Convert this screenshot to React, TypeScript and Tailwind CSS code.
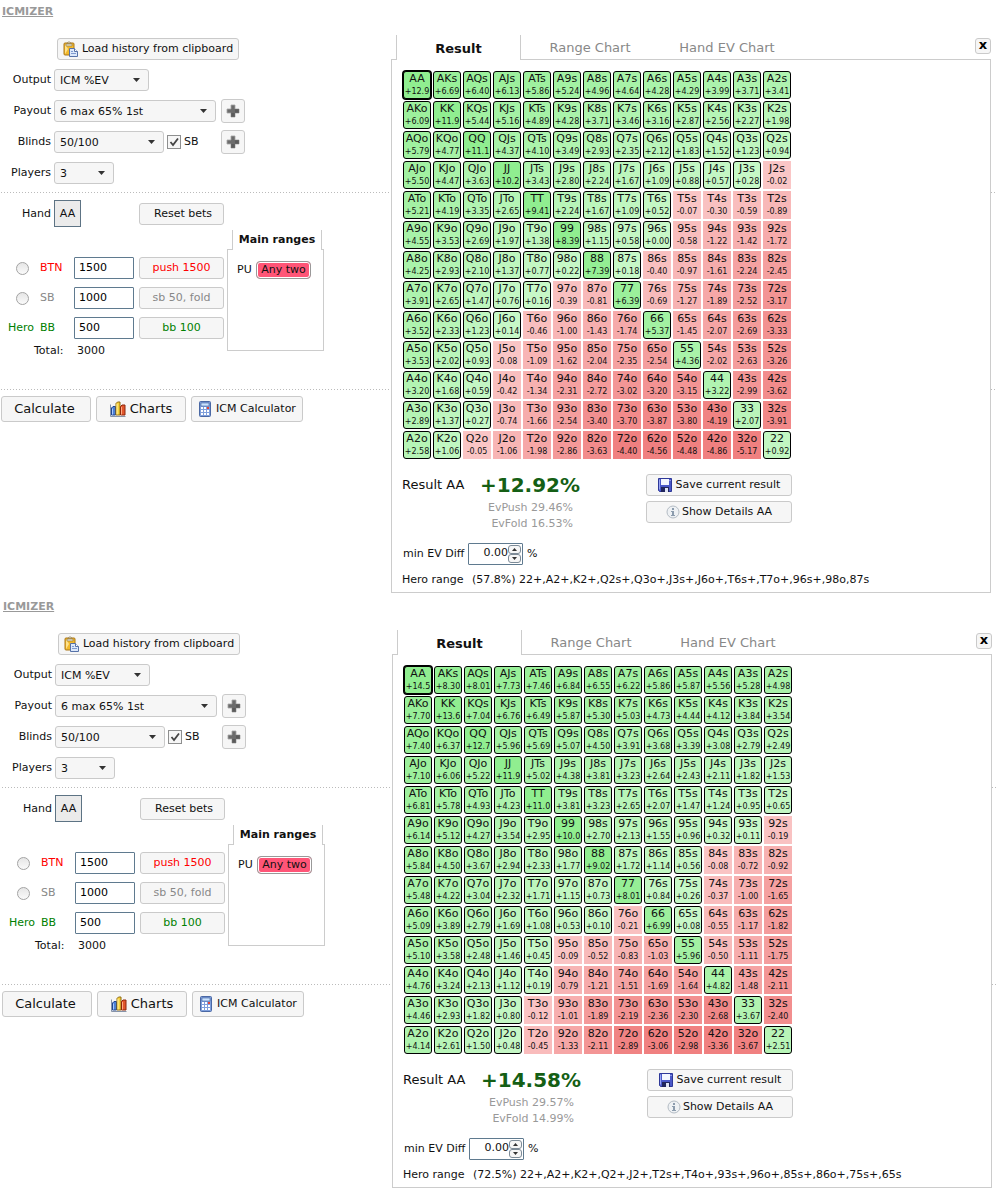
import React, { useId, useState } from 'react';

type PanelData = {
  ev: string[];
  result: string;
  evPush: string;
  evFold: string;
  percent: string;
  range: string;
  // EV at which the cell colour stops getting darker
  maxWin: number;
  maxLoss: number;
};

const RANKS = 'AKQJT98765432'.split('');

const panels: PanelData[] = [
  {
    ev: [
      '+12.9 +6.69 +6.40 +6.13 +5.86 +5.24 +4.96 +4.64 +4.28 +4.29 +3.99 +3.71 +3.41',
      '+6.09 +11.9 +5.44 +5.16 +4.89 +4.28 +3.71 +3.46 +3.16 +2.87 +2.56 +2.27 +1.98',
      '+5.79 +4.77 +11.1 +4.37 +4.10 +3.49 +2.93 +2.35 +2.12 +1.83 +1.52 +1.23 +0.94',
      '+5.50 +4.47 +3.63 +10.2 +3.43 +2.80 +2.24 +1.67 +1.09 +0.88 +0.57 +0.28 -0.02',
      '+5.21 +4.19 +3.35 +2.65 +9.41 +2.24 +1.67 +1.09 +0.52 -0.07 -0.30 -0.59 -0.89',
      '+4.55 +3.53 +2.69 +1.97 +1.38 +8.39 +1.15 +0.58 +0.00 -0.58 -1.22 -1.42 -1.72',
      '+4.25 +2.93 +2.10 +1.37 +0.77 +0.22 +7.39 +0.18 -0.40 -0.97 -1.61 -2.24 -2.45',
      '+3.91 +2.65 +1.47 +0.76 +0.16 -0.39 -0.81 +6.39 -0.69 -1.27 -1.89 -2.52 -3.17',
      '+3.52 +2.33 +1.23 +0.14 -0.46 -1.00 -1.43 -1.74 +5.37 -1.45 -2.07 -2.69 -3.33',
      '+3.53 +2.02 +0.93 -0.08 -1.09 -1.62 -2.04 -2.35 -2.54 +4.36 -2.02 -2.63 -3.26',
      '+3.20 +1.68 +0.59 -0.42 -1.34 -2.31 -2.72 -3.02 -3.20 -3.15 +3.22 -2.99 -3.62',
      '+2.89 +1.37 +0.27 -0.74 -1.66 -2.54 -3.40 -3.70 -3.87 -3.80 -4.19 +2.07 -3.91',
      '+2.58 +1.06 -0.05 -1.06 -1.98 -2.86 -3.63 -4.40 -4.56 -4.48 -4.86 -5.17 +0.92',
    ],
    result: '+12.92%',
    evPush: '29.46%',
    evFold: '16.53%',
    percent: '(57.8%)',
    range: '22+,A2+,K2+,Q2s+,Q3o+,J3s+,J6o+,T6s+,T7o+,96s+,98o,87s',
    maxWin: 8,
    maxLoss: 4.4,
  },
  {
    ev: [
      '+14.5 +8.30 +8.01 +7.73 +7.46 +6.84 +6.55 +6.22 +5.86 +5.87 +5.56 +5.28 +4.98',
      '+7.70 +13.6 +7.04 +6.76 +6.49 +5.87 +5.30 +5.03 +4.73 +4.44 +4.12 +3.84 +3.54',
      '+7.40 +6.37 +12.7 +5.96 +5.69 +5.07 +4.50 +3.91 +3.68 +3.39 +3.08 +2.79 +2.49',
      '+7.10 +6.06 +5.22 +11.9 +5.02 +4.38 +3.81 +3.23 +2.64 +2.43 +2.11 +1.82 +1.53',
      '+6.81 +5.78 +4.93 +4.23 +11.0 +3.81 +3.23 +2.65 +2.07 +1.47 +1.24 +0.95 +0.65',
      '+6.14 +5.12 +4.27 +3.54 +2.95 +10.0 +2.70 +2.13 +1.55 +0.96 +0.32 +0.11 -0.19',
      '+5.84 +4.50 +3.67 +2.94 +2.33 +1.77 +9.02 +1.72 +1.14 +0.56 -0.08 -0.72 -0.92',
      '+5.48 +4.22 +3.04 +2.32 +1.71 +1.15 +0.73 +8.01 +0.84 +0.26 -0.37 -1.00 -1.65',
      '+5.09 +3.89 +2.79 +1.69 +1.08 +0.53 +0.10 -0.21 +6.99 +0.08 -0.55 -1.17 -1.82',
      '+5.10 +3.58 +2.48 +1.46 +0.45 -0.09 -0.52 -0.83 -1.03 +5.96 -0.50 -1.11 -1.75',
      '+4.76 +3.24 +2.13 +1.12 +0.19 -0.79 -1.21 -1.51 -1.69 -1.64 +4.82 -1.48 -2.11',
      '+4.46 +2.93 +1.82 +0.80 -0.12 -1.01 -1.89 -2.19 -2.36 -2.30 -2.68 +3.67 -2.40',
      '+4.14 +2.61 +1.50 +0.48 -0.45 -1.33 -2.11 -2.89 -3.06 -2.98 -3.36 -3.67 +2.51',
    ],
    result: '+14.58%',
    evPush: '29.57%',
    evFold: '14.99%',
    percent: '(72.5%)',
    range: '22+,A2+,K2+,Q2+,J2+,T2s+,T4o+,93s+,96o+,85s+,86o+,75s+,65s',
    maxWin: 9,
    maxLoss: 3,
  },
];

const handName = (row: number, col: number) => {
  if (row === col) return RANKS[row] + RANKS[row];
  return row < col ? `${RANKS[row]}${RANKS[col]}s` : `${RANKS[col]}${RANKS[row]}o`;
};

const mix = (from: number[], to: number[], t: number) =>
  `rgb(${from.map((c, i) => Math.round(c + (to[i] - c) * t)).join(',')})`;

const cellColor = (value: string, data: PanelData) => {
  const ev = Math.abs(parseFloat(value));
  return value.startsWith('+')
    ? mix([200, 248, 200], [144, 238, 144], Math.min(1, ev / data.maxWin))
    : mix([250, 198, 198], [240, 128, 128], Math.min(1, ev / data.maxLoss));
};

const ClipboardIcon = () => (
  <svg width="16" height="16" viewBox="0 0 16 16" aria-hidden="true">
    <rect x="1" y="2" width="10" height="12" rx="1" fill="#f2b92c" stroke="#a9761a" />
    <path d="M2 3v10l3-5z" fill="#ffe28a" />
    <path d="M3 3h6v2H3z" fill="#e9e4d2" stroke="#8b7440" strokeWidth=".6" />
    <path d="M4.5 2.500V1.500q1.500-1.500 3 0v1z" fill="#d9d2bb" stroke="#8b7440" strokeWidth=".6" />
    <path d="M6.500 7.500h5l3 3v5h-8z" fill="#dce8fa" stroke="#5672a8" />
    <path d="M11.500 7.500v3h3" fill="#fff" stroke="#5672a8" />
    <path d="M8 10.500h2M8 12.500h5" stroke="#7f9bd0" />
  </svg>
);

const ChartIcon = () => (
  <svg width="16" height="16" viewBox="0 0 16 16" aria-hidden="true">
    <path d="M.5 3.500v12h15" fill="none" stroke="#8693a8" />
    <path d="M1.500 7l1.500-1.500h2.500V14H1.500z" fill="#4b7fd6" stroke="#1f4590" />
    <path d="M2.500 7.500v6" stroke="#a8c8fb" />
    <path d="M6 2.500L7.500 1H10v13H6z" fill="#f7d23c" stroke="#8f6a10" />
    <path d="M7 3v10.500" stroke="#fff3ac" />
    <path d="M10.500 5.500L12 4h3v10h-4.500z" fill="#e2562c" stroke="#8c260c" />
    <path d="M11.500 6v7.500" stroke="#ffab84" />
  </svg>
);

const CalculatorIcon = () => (
  <svg width="14" height="16" viewBox="0 0 14 16" aria-hidden="true">
    <rect x="1.500" y=".5" width="11" height="15" rx="1" fill="#7f9fdc" stroke="#4a68a4" />
    <rect x="3" y="2" width="8" height="3" fill="#c9e2ff" stroke="#2f4c87" strokeWidth=".5" />
    <path d="M3 7h5M3 10h5M3 13h5" stroke="#fff" strokeWidth="2" strokeDasharray="2 1" />
    <path d="M9 7h2" stroke="#e5443b" strokeWidth="2" />
    <path d="M9 10h2M9 13h2" stroke="#fff" strokeWidth="2" />
  </svg>
);

const DiskIcon = () => (
  <svg width="14" height="14" viewBox="0 0 14 14" aria-hidden="true">
    <path d="M.5.5h13v13h-12l-1-1z" fill="#4a58c8" stroke="#2e3898" />
    <rect x="3" y="1" width="8" height="6" fill="#f3f6ff" />
    <path d="M1.500 1.500v10" stroke="#9aa6f4" />
    <rect x="3" y="9" width="8" height="5" fill="#20255c" />
    <rect x="7" y="10" width="3" height="4" fill="#dfe4f5" />
    <path d="M12 2v1" stroke="#cfd5ff" />
  </svg>
);

const InfoIcon = () => (
  <svg width="14" height="14" viewBox="0 0 14 14" aria-hidden="true">
    <circle cx="7" cy="7" r="6" fill="#eef1f4" stroke="#b4bcc4" />
    <path d="M6 3h2v2H6z" fill="#8c9cad" />
    <path d="M5 6h3v4h1v1H5v-1h1V7H5z" fill="#8c9cad" />
  </svg>
);

const PlusIcon = () => (
  <svg width="14" height="14" viewBox="0 0 14 14" aria-hidden="true">
    <path d="M5 1h4v4h4v4H9v4H5V9H1V5h4z" fill="#6c6c6c" stroke="#a5a5a5" strokeWidth=".8" />
    <path d="M5 9h4v4H5zM9 5h4v4H9z" fill="#505050" opacity=".6" />
  </svg>
);

type ButtonProps = React.ButtonHTMLAttributes<HTMLButtonElement>;

const Button = ({ className = '', ...props }: ButtonProps) => (
  <button
    type="button"
    className={`flex items-center justify-center rounded-[3px] border border-[#cacaca] bg-[#f6f6f6] whitespace-nowrap ${className}`}
    {...props}
  />
);

const Select = ({ id, value, className }: { id: string; value: string; className: string }) => (
  <div className={`relative h-[22px] ${className}`}>
    <select
      id={id}
      className="h-full w-full appearance-none rounded-[3px] border border-[#cacaca] bg-[#f6f6f6] pt-px pl-[5px]"
    >
      <option>{value}</option>
    </select>
    <svg
      className="pointer-events-none absolute top-[9px] right-[9px]"
      width="7"
      height="4"
      viewBox="0 0 7 4"
      aria-hidden="true"
    >
      <path d="M0 0h7L3.500 4z" fill="#333" />
    </svg>
  </div>
);

const Field = ({ id, label, children }: { id: string; label: string; children: React.ReactNode }) => (
  <div className="flex h-6 items-center">
    <label htmlFor={id} className="mr-[3px] w-[51px] text-right">
      {label}
    </label>
    {children}
  </div>
);

const DottedLine = ({ className }: { className: string }) => (
  <div
    className={`col-span-2 col-start-1 ml-px h-px bg-[repeating-linear-gradient(90deg,#bbb_0_1px,transparent_1px_3px)] ${className}`}
  />
);

const seats = [
  { name: 'BTN', stack: '1500', action: 'push 1500', color: 'text-[#ff0000]' },
  { name: 'SB', stack: '1000', action: 'sb 50, fold', color: 'text-[#888]' },
  { name: 'BB', stack: '500', action: 'bb 100', color: 'text-[#008000]', hero: true },
];

const SetupForm = () => {
  const id = useId();

  return (
    <form className="col-start-1 row-start-1 flex flex-col gap-[7px] pt-[2px] pb-[7px]">
      <div className="flex h-6 items-center pl-[57px]">
        <Button className="h-[22px] w-[182px] gap-[3px]">
          <ClipboardIcon />
          Load history from clipboard
        </Button>
      </div>
      <Field id={`${id}-output`} label="Output">
        <Select id={`${id}-output`} value="ICM %EV" className="w-[95px]" />
      </Field>
      <Field id={`${id}-payout`} label="Payout">
        <Select id={`${id}-payout`} value="6 max 65% 1st" className="w-[162px]" />
        <Button className="ml-[5px] size-6" aria-label="Add payout">
          <PlusIcon />
        </Button>
      </Field>
      <Field id={`${id}-blinds`} label="Blinds">
        <Select id={`${id}-blinds`} value="50/100" className="w-[110px]" />
        <label className="ml-[3px] flex w-[54px] items-center gap-[3px]">
          <span className="relative size-[14px]">
            <input
              type="checkbox"
              defaultChecked
              className="peer block size-[14px] appearance-none border border-[#8e8f8f] bg-[#f6f6f6]"
            />
            <svg
              className="pointer-events-none absolute top-0 left-0 hidden peer-checked:block"
              width="14"
              height="14"
              viewBox="0 0 14 14"
              aria-hidden="true"
            >
              <path d="M3.500 7l2.500 3 5-6.500" fill="none" stroke="#444" strokeWidth="1.800" />
            </svg>
          </span>
          SB
        </label>
        <Button className="size-6" aria-label="Add blinds">
          <PlusIcon />
        </Button>
      </Field>
      <Field id={`${id}-players`} label="Players">
        <Select id={`${id}-players`} value="3" className="w-[60px]" />
      </Field>
    </form>
  );
};

const Bets = () => {
  const id = useId();

  return (
    <div className="col-start-1 row-start-3 flex items-start pt-[7px] pb-[30px]">
      <div className="w-[224px]">
        <div className="flex items-center">
          <span className="mr-[3px] w-[51px] text-right">Hand</span>
          <button type="button" className="size-[27px] border border-[#5d7384] bg-[#ebebeb]">
            AA
          </button>
          <Button className="ml-auto h-[22px] w-[85px] pl-[3px]">Reset bets</Button>
        </div>
        <div className="mt-[30px] flex flex-col gap-2">
          {seats.map((seat) => (
            <div key={seat.name} className={`flex h-[22px] items-center ${seat.color}`}>
              <div className="w-10 pl-2">
                {seat.hero ? (
                  'Hero'
                ) : (
                  <input
                    type="radio"
                    name={`${id}-hero`}
                    aria-label={seat.name}
                    className="ml-2 block size-[13px] appearance-none rounded-full border border-[#a3a3a3] bg-linear-to-b from-[#e6e6e6] to-[#fafafa]"
                  />
                )}
              </div>
              <label htmlFor={`${id}-${seat.name}`} className="w-[34px]">
                {seat.name}
              </label>
              <input
                id={`${id}-${seat.name}`}
                defaultValue={seat.stack}
                className="h-full w-[60px] rounded-[1px] border border-[#5f7a8f] bg-white pb-[2px] pl-1 text-black"
              />
              <Button className="ml-auto h-full w-[85px]">{seat.action}</Button>
            </div>
          ))}
        </div>
        <div className="mt-1 flex">
          <span className="w-[77px] pl-[34px]">Total:</span>
          <span>3000</span>
        </div>
      </div>

      <div className="mt-[30px] ml-[3px] w-[97px]">
        <div className="flex h-5">
          <div className="w-[5px] border-b border-[#ccc]" />
          <div className="flex-1 border-x border-[#ccc] text-center leading-5 font-bold whitespace-nowrap">
            Main ranges
          </div>
          <div className="w-[2px] border-b border-[#ccc]" />
        </div>
        <div className="h-[101px] border-x border-b border-[#ccc] pt-[11px] pl-[9px]">
          <div className="flex items-center justify-between pr-3">
            PU
            <button
              type="button"
              className="h-[18px] w-[55px] rounded-[4px] border border-[#999] bg-[#ff5577] leading-[14px] whitespace-nowrap inset-ring inset-ring-white"
            >
              Any two
            </button>
          </div>
        </div>
      </div>
    </div>
  );
};

const EvTable = ({ data }: { data: PanelData }) => (
  <table className="ml-[9px] border-separate border-spacing-[2px] text-center">
    <tbody>
      {data.ev.map((line, row) => (
        <tr key={row}>
          {line.split(' ').map((value, col) => {
            const win = value.startsWith('+');
            const selected = row === 0 && col === 0;
            return (
              <td
                key={col}
                className={`size-7 p-0 ${win ? 'rounded-[3px] border border-black' : 'border border-transparent'} ${
                  selected ? 'ring-1 ring-black' : ''
                }`}
                style={{ backgroundColor: cellColor(value, data) }}
              >
                <div className="w-[26px] leading-[13px]">{handName(row, col)}</div>
                <div className="w-[26px] text-[8px] leading-[13px]">{value}</div>
              </td>
            );
          })}
        </tr>
      ))}
    </tbody>
  </table>
);

const tabs = ['Result', 'Range Chart', 'Hand EV Chart'];

const ResultPanel = ({ data }: { data: PanelData }) => {
  const id = useId();
  const [minDiff, setMinDiff] = useState(0);

  return (
    <div className="z-10 col-start-2 row-span-5 row-start-1 mr-1 flex flex-col bg-white">
      <div className="flex h-[25px] text-[13px]">
        <div className="w-[5px] border-b border-[#ccc]" />
        <button type="button" className="w-[125px] border-x border-[#ccc] pt-[2px] font-bold">
          {tabs[0]}
        </button>
        <div className="flex flex-1 items-start border-b border-[#ccc] text-[#888]">
          <button type="button" className="ml-[14px] h-6 w-[110px] pt-[2px]">
            {tabs[1]}
          </button>
          <button type="button" className="ml-[14px] h-6 w-[136px] pt-[2px]">
            {tabs[2]}
          </button>
          <Button className="mt-[3px] ml-auto size-4 pb-[2px] font-bold text-black" aria-label="Close">
            x
          </Button>
        </div>
      </div>

      <div className="border-x border-b border-[#ccc] pt-[9px] pb-1">
        <EvTable data={data} />

        <div className="mt-[13px] flex items-start pl-[10px]">
          <div className="w-[244px]">
            <div className="flex h-[22px] items-center">
              <span className="w-[78px] text-[13px]">Result AA</span>
              <span className="text-[20px] font-bold text-[#155f15]">{data.result}</span>
            </div>
            <div className="mt-1 w-[171px] text-right text-[#999]">
              <div>EvPush {data.evPush}</div>
              <div>EvFold {data.evFold}</div>
            </div>
          </div>
          <div className="flex flex-col gap-[5px]">
            <Button className="h-[22px] w-[146px] gap-1">
              <DiskIcon />
              Save current result
            </Button>
            <Button className="h-[22px] w-[146px] gap-[2px]">
              <InfoIcon />
              Show Details AA
            </Button>
          </div>
        </div>

        <div className="mt-[11px] flex items-center pl-[11px]">
          <label htmlFor={`${id}-diff`} className="w-[65px] whitespace-nowrap">
            min EV Diff
          </label>
          <div className="flex h-[22px] w-[55px] items-center rounded-[1px] border border-[#5f7a8f] pr-px">
            <input
              id={`${id}-diff`}
              value={minDiff.toFixed(2)}
              readOnly
              className="w-0 flex-1 bg-transparent pb-[2px] text-right"
            />
            <div className="flex flex-col">
              <button
                type="button"
                aria-label="Increase"
                onClick={() => setMinDiff(minDiff + 0.01)}
                className="flex h-[9px] w-[13px] items-center justify-center rounded-[3px] border border-[#7d8b97] bg-[#f6f6f6]"
              >
                <svg width="5" height="3" viewBox="0 0 5 3" aria-hidden="true">
                  <path d="M0 3h5L2.500 0z" fill="#333" />
                </svg>
              </button>
              <button
                type="button"
                aria-label="Decrease"
                onClick={() => setMinDiff(minDiff - 0.01)}
                className="flex h-[9px] w-[13px] items-center justify-center rounded-[3px] border border-[#7d8b97] bg-[#f6f6f6]"
              >
                <svg width="5" height="3" viewBox="0 0 5 3" aria-hidden="true">
                  <path d="M0 0h5L2.500 3z" fill="#333" />
                </svg>
              </button>
            </div>
          </div>
          <span className="ml-1">%</span>
        </div>

        <div className="mt-[7px] flex pl-[10px]">
          <span className="w-[70px]">Hero range</span>
          <span>
            {data.percent} {data.range}
          </span>
        </div>
      </div>
    </div>
  );
};

const Icmizer = ({ data, className }: { data: PanelData; className: string }) => (
  <section className={`pb-[2px] ${className}`}>
    <header className="h-[35px] pt-1 pl-[2px]">
      <a href="#" className="font-bold text-[#999] underline">
        ICMIZER
      </a>
    </header>
    <div className="grid grid-cols-[391px_1fr] grid-rows-[auto_auto_auto_auto_1fr]">
      <SetupForm />
      <DottedLine className="row-start-2" />
      <Bets />
      <DottedLine className="row-start-4" />
      <div className="col-start-1 row-start-5 flex items-start gap-[5px] pt-[6px] pl-px">
        <Button className="h-[26px] w-[90px] pr-[3px] text-[13px]">Calculate</Button>
        <Button className="h-[26px] w-[90px] gap-1 text-[13px]">
          <ChartIcon />
          Charts
        </Button>
        <Button className="h-[26px] w-[112px] gap-1">
          <CalculatorIcon />
          ICM Calculator
        </Button>
      </div>
      <ResultPanel data={data} />
    </div>
  </section>
);

const App = () => (
  <main className="min-h-screen bg-white font-['DejaVu_Sans',sans-serif] text-[11px] leading-4 text-[#111]">
    <Icmizer data={panels[0]} className="pr-px" />
    <Icmizer data={panels[1]} className="pl-px" />
  </main>
);

export default App;
